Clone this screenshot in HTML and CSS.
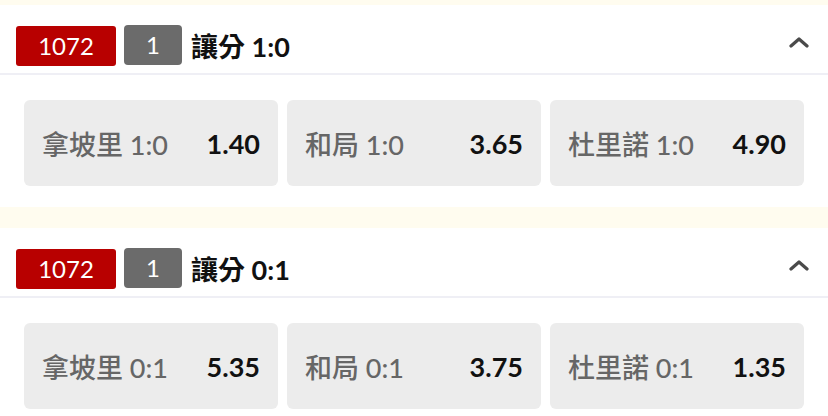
FILE: index.html
```html
<!DOCTYPE html>
<html>
  <head>
    <meta charset="utf-8">
    <title>讓分</title>
    <link rel="stylesheet" href="styles.css">
  </head>
  <body>
    <div class="market">
      <div class="market-head">
        <span class="code">1072</span>
        <span class="num">1</span>
        <span class="title">讓分 1:0</span>
        <svg class="toggle" width="20" height="12" viewBox="0 0 20 12"><path d="M2 10 L10 3 L18 10" fill="none" stroke="#4a4a4a" stroke-width="3.2" stroke-linecap="round" stroke-linejoin="round"/></svg>
      </div>
      <div class="odds">
        <div class="odd"><span class="label">拿坡里 1:0</span><span class="price">1.40</span></div>
        <div class="odd"><span class="label">和局 1:0</span><span class="price">3.65</span></div>
        <div class="odd"><span class="label">杜里諾 1:0</span><span class="price">4.90</span></div>
      </div>
    </div>

    <div class="market">
      <div class="market-head">
        <span class="code">1072</span>
        <span class="num">1</span>
        <span class="title">讓分 0:1</span>
        <svg class="toggle" width="20" height="12" viewBox="0 0 20 12"><path d="M2 10 L10 3 L18 10" fill="none" stroke="#4a4a4a" stroke-width="3.2" stroke-linecap="round" stroke-linejoin="round"/></svg>
      </div>
      <div class="odds">
        <div class="odd"><span class="label">拿坡里 0:1</span><span class="price">5.35</span></div>
        <div class="odd"><span class="label">和局 0:1</span><span class="price">3.75</span></div>
        <div class="odd"><span class="label">杜里諾 0:1</span><span class="price">1.35</span></div>
      </div>
    </div>
  </body>
</html>
```

FILE: styles.css
```css
body {
  margin: 0;
  padding-top: 5px;
  background-color: #fffcef;
  font-family: Lato, "Noto Sans CJK TC", sans-serif;
  color: #111;
}
.market {
  background-color: #fff;
  margin-bottom: 21px;
}
.market-head {
  display: flex;
  align-items: center;
  height: 70px;
  box-sizing: border-box;
  padding: 12px 19px 0 16px;
  border-bottom: 2px solid #efeff5;
}
.code {
  width: 100px;
  height: 40px;
  margin-top: 2px;
  line-height: 40px;
  text-align: center;
  background-color: #b80000;
  color: #fff;
  border-radius: 3px;
  font-size: 24px;
}
.num {
  width: 58px;
  height: 40px;
  margin-left: 8px;
  line-height: 40px;
  text-align: center;
  background-color: #6b6b6b;
  color: #fff;
  border-radius: 4px;
  font-size: 24px;
}
.title {
  margin-left: 9px;
  font-size: 27px;
  font-weight: 700;
}
.toggle {
  margin-left: auto;
  margin-top: -6px;
}
.odds {
  display: grid;
  grid-template-columns: 1fr 1fr 1fr;
  gap: 9px;
  padding: 25px 24px 21px;
}
.odd {
  display: flex;
  align-items: center;
  justify-content: space-between;
  height: 86px;
  padding: 0 18px;
  background-color: #ececec;
  border-radius: 6px;
}
.label {
  font-size: 27px;
  font-weight: 500;
  color: #666;
}
.price {
  font-size: 27px;
  font-weight: 700;
  color: #111;
}
```
